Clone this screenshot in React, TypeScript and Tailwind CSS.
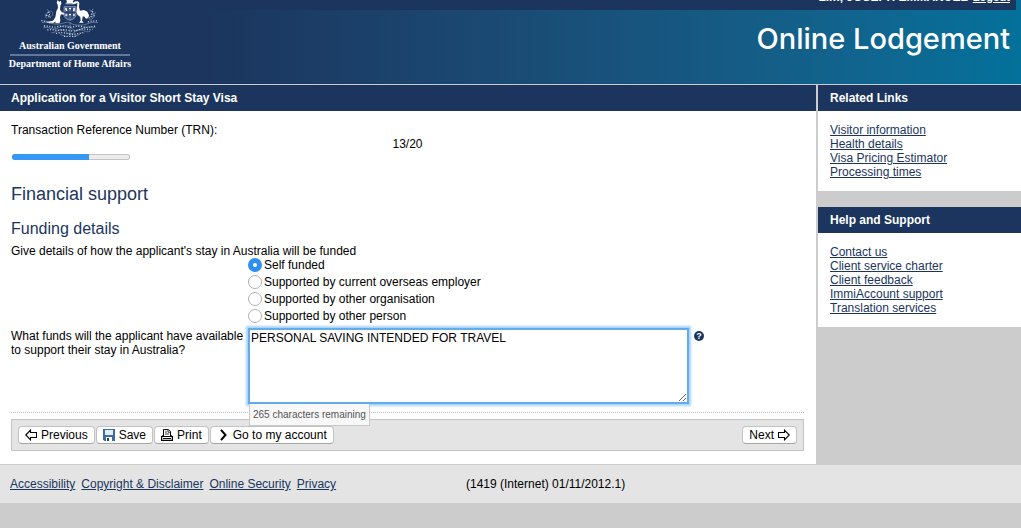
import React, { useState } from 'react';

const relatedLinks = ['Visitor information', 'Health details', 'Visa Pricing Estimator', 'Processing times'];

const helpLinks = [
  'Contact us',
  'Client service charter',
  'Client feedback',
  'ImmiAccount support',
  'Translation services',
];

const footerLinks = ['Accessibility', 'Copyright & Disclaimer', 'Online Security', 'Privacy'];

const fundingOptions = [
  'Self funded',
  'Supported by current overseas employer',
  'Supported by other organisation',
  'Supported by other person',
];

const MAX_CHARS = 300;

function CoatOfArms() {
  return (
    <svg className="mx-auto block h-[38px] w-[60px]" viewBox="0 0 180 114" fill="none" aria-hidden="true">
      {/* star and crest */}
      <path d="M79 0h22l-3 6 5 5H76l5-5z" fill="#fff" />
      <path d="M76 12h28" stroke="#7c8db0" strokeWidth="3" />
      {/* kangaroo */}
      <path
        d="M53 0l4 5 6-2 1 8-3 6-1 12 6 8 8 3-2 4-9-1-3 8 1 12-3 7H45l4-6-8 4-20 1 2-4 16-3 7-10 3-18 5-10-1-10-3-6z"
        fill="#fff"
      />
      {/* emu */}
      <path
        d="M112 8l-7 4-8-1 1-3 9-4 7 0 4 5-1 13 3 10 12-2 10 5 5 11-2 8-7 2-6-7-4 1-2 12 5 6h-14l5-6-1-11-8-6-4-9 2-13z"
        fill="#fff"
      />
      {/* shield */}
      <path d="M72 20h36v24c0 9-9 14-18 17-9-3-18-8-18-17z" fill="#50658f" stroke="#a9b5cd" strokeWidth="2" />
      <path d="M84 21v34M96 21v34M73 37h34" stroke="#1b355e" strokeWidth="3" />
      <path
        d="M75 27h6M87 26h6M99 27h6M76 45h6M87 44h6M99 45h5M78 31h4M99 32h5"
        stroke="#fff"
        strokeWidth="4"
      />
      {/* wattle branches */}
      <g stroke="#8797b7" strokeWidth="2">
        <path d="M6 68c16-6 32 8 52 4s24-8 34-2 34 8 48 2 24-6 34-4" />
        <path d="M10 84c14-6 24 6 38 2s22-12 36-8 14 18 30 12 24-12 52-8" />
        <path d="M34 98c12 2 20-12 34-8s12 12 24 12 14-14 30-12 14 8 28 4" />
        <path d="M90 66v44M80 110c-8-4-18-4-22-10M100 110c8-4 18-4 24-12" />
        <path d="M20 56c-8-8 2-20 10-22s10 8 6 14M28 48l-14-4M30 40l-8-12M148 30c10 2 16 14 12 22s-10 8-14 4M156 44l12-6M152 36l8-10" />
      </g>
      <g stroke="#d3dae7" strokeWidth="4" strokeDasharray="3 5">
        <path d="M4 62c14 0 22 8 34 6M144 66c10-4 20-2 30-4" />
        <path d="M12 78c18 0 26 6 40 2s24 2 36 2 24-6 38-2 24 2 42-2" />
        <path d="M22 90c18-4 26 4 42 0s30 8 50 0 28 2 44-2" />
        <path d="M48 100c12-4 22-2 40 2s30-4 46-4M72 109h38" />
        <path d="M24 36l8 16M18 46l14 6M158 34l-6 16M164 46l-16 8" />
      </g>
    </svg>
  );
}

function ArrowIcon({ right }: { right?: boolean }) {
  return (
    <svg className={right ? 'h-3 w-3 rotate-180' : 'h-3 w-3'} viewBox="0 0 12 12" fill="none" stroke="#000" aria-hidden="true">
      <path d="M.8 6 5.5 1.2v2.3h6v5h-6v2.3z" strokeWidth="1.1" />
    </svg>
  );
}

function SaveIcon() {
  return (
    <svg className="h-3 w-3" viewBox="0 0 12 12" aria-hidden="true">
      <path d="M0 0h12v12H1.500L0 10.500z" fill="#3c6ca3" />
      <path d="M2 1h8v5H2z" fill="#e2eef9" />
      <path d="M3 8h6v4H3z" fill="#fff" />
      <path d="M4 9h2v3H4z" fill="#1b3f6e" />
    </svg>
  );
}

function PrintIcon() {
  return (
    <svg className="h-3 w-3" viewBox="0 0 12 12" fill="none" stroke="#000" aria-hidden="true">
      <path d="M2.500 7V.6h5l2 2V7" fill="#fff" />
      <path d="M7 .8v2.400h2.500M4 3h2M4 5h4" strokeWidth=".8" />
      <path d="M.6 7.500h10.800v3.900H.6z" fill="#fff" strokeWidth="1.200" />
      <path d="M1 7.500 2.500 5.500M11 7.500 9.500 5.500M2 9.500h8" />
    </svg>
  );
}

function ChevronIcon() {
  return (
    <svg className="h-3 w-3" viewBox="0 0 12 12" fill="none" stroke="#000" aria-hidden="true">
      <path d="M4 .8 8.500 6 4 11.200" strokeWidth="2" />
    </svg>
  );
}

function ToolButton({ children }: { children: React.ReactNode }) {
  return (
    <button
      type="button"
      className="flex h-[18px] items-center gap-1 rounded border border-[#c3c3c3] border-b-[#a5a5a5] bg-white px-[6px] text-[12px] leading-[14px] whitespace-nowrap"
    >
      {children}
    </button>
  );
}

function LinkPanel({ title, links }: { title: string; links: string[] }) {
  return (
    <section className="bg-white">
      <h2 className="bg-[#1b355e] px-3 py-[6px] text-[12px] leading-[14px] font-bold text-white">{title}</h2>
      <ul className="p-3 text-[12px] leading-[14px] text-[#1b355e]">
        {links.map((link) => (
          <li key={link}>
            <a href="#" className="underline">
              {link}
            </a>
          </li>
        ))}
      </ul>
    </section>
  );
}

export default function App() {
  const [funding, setFunding] = useState(fundingOptions[0]);
  const [funds, setFunds] = useState('PERSONAL SAVING INTENDED FOR TRAVEL');

  return (
    <div className="min-h-screen bg-[#cccccc] font-['Liberation_Sans',Arial,sans-serif] text-[12px] leading-[14px] text-black">
      <header className="flex h-[85px] justify-between border-b border-[#cccccc] bg-linear-to-r from-[#1b355e] from-20% to-[#03719b]">
        <div className="ml-[10px] w-[120px] text-center font-['Liberation_Serif',serif] text-[10px] leading-[16px] font-bold whitespace-nowrap text-white">
          <CoatOfArms />
          <p className="border-b-2 border-[#62779a]">Australian Government</p>
          <p className="flex justify-center">Department of Home Affairs</p>
        </div>
        <div className="flex flex-1 flex-col">
          <div className="mr-[5px] flex h-[10px] items-end justify-end gap-[5px] bg-[#1b355e] pr-[6px] pb-[6px] font-bold text-white">
            <span>Lim, JOSEPH EMMANUEL</span>
            <a href="#" className="text-[11px] underline">
              Logout
            </a>
          </div>
          <h1 className="mt-[10px] pr-[11px] text-right font-[Inter,sans-serif] text-[29px] leading-[38px] font-medium text-white">
            Online Lodgement
          </h1>
        </div>
      </header>

      <div className="flex">
        <main className="mr-[2px] flex-1 border-b border-[#cccccc] bg-white">
          <h2 className="bg-[#1b355e] px-[11px] py-[6px] font-bold text-white">Application for a Visitor Short Stay Visa</h2>

          <div className="pt-3 pr-3 pb-[13px] pl-[11px]">
            <p>Transaction Reference Number (TRN):</p>
            <p className="text-center">13/20</p>
            <div className="mt-[3px] ml-px h-[6px] w-[118px] overflow-hidden rounded-full bg-[#ececec] inset-ring inset-ring-[#c4c4c4]">
              <div className="h-full bg-[#3698f3]" style={{ width: `${(13 / 20) * 100}%` }} />
            </div>

            <h3 className="mt-6 text-[18px] leading-[20px] text-[#1b355e]">Financial support</h3>
            <h4 className="mt-4 text-[16px] leading-[18px] text-[#1b355e]">Funding details</h4>

            <form className="mt-[6px] border-b border-dotted border-[#bbbbbb] pb-2">
              <fieldset>
                <legend>Give details of how the applicant's stay in Australia will be funded</legend>
                <div className="ml-[237px] flex flex-col gap-[3px]">
                  {fundingOptions.map((option) => (
                    <label key={option} className="flex items-center gap-[2px]">
                      <input
                        type="radio"
                        name="funding"
                        checked={funding === option}
                        onChange={() => setFunding(option)}
                        className="h-[14px] w-[14px] appearance-none rounded-full border border-[#b0b0b0] bg-white checked:border-[5px] checked:border-[#2f8ff0]"
                      />
                      {option}
                    </label>
                  ))}
                </div>
              </fieldset>

              <div className="mt-[5px] flex items-start">
                <label htmlFor="funds" className="w-[237px] shrink-0 pt-px">
                  What funds will the applicant have available to support their stay in Australia?
                </label>
                <div className="relative">
                  <textarea
                    id="funds"
                    value={funds}
                    maxLength={MAX_CHARS}
                    onChange={(e) => setFunds(e.target.value)}
                    className="block h-[76px] w-[441px] resize border-2 border-[#63acea] bg-white px-px py-px shadow-[0_0_2px_2px_#a8d3f8] outline-none"
                  />
                  <output
                    htmlFor="funds"
                    className="absolute top-full left-[1px] border border-t-0 border-[#c8c8c8] bg-[#f8f8f8] px-[3px] pt-1 pb-[3px] text-[10px] leading-[14px] whitespace-nowrap text-[#555555]"
                  >
                    {MAX_CHARS - funds.length} characters remaining
                  </output>
                </div>
                <button
                  type="button"
                  aria-label="Help"
                  className="mt-[3px] ml-[5px] h-[10px] w-[10px] rounded-full bg-[#1b355e] text-[9px] leading-[10px] font-bold text-white"
                >
                  ?
                </button>
              </div>
            </form>

            <div className="mt-[6px] flex items-center gap-px border border-[#c4c4c4] bg-[#e4e4e4] px-[6px] py-[6px]">
              <ToolButton>
                <ArrowIcon /> Previous
              </ToolButton>
              <ToolButton>
                <SaveIcon /> Save
              </ToolButton>
              <ToolButton>
                <PrintIcon /> Print
              </ToolButton>
              <ToolButton>
                <ChevronIcon /> Go to my account
              </ToolButton>
              <div className="ml-auto">
                <ToolButton>
                  Next <ArrowIcon right />
                </ToolButton>
              </div>
            </div>
          </div>
        </main>

        <aside className="flex w-[203px] flex-col gap-4">
          <LinkPanel title="Related Links" links={relatedLinks} />
          <LinkPanel title="Help and Support" links={helpLinks} />
        </aside>
      </div>

      <footer className="grid grid-cols-[456px_1fr] bg-[#e4e4e4] px-[10px] py-3">
        <nav className="flex gap-[6px] text-[#1b355e]">
          {footerLinks.map((link) => (
            <a key={link} href="#" className="underline">
              {link}
            </a>
          ))}
        </nav>
        <p>(1419 (Internet) 01/11/2012.1)</p>
      </footer>
    </div>
  );
}
